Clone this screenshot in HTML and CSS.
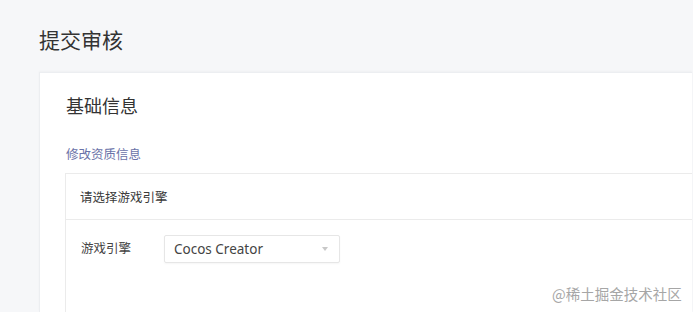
FILE: index.html
```html
<!DOCTYPE html>
<html lang="zh">
<head>
<meta charset="utf-8">
<title>提交审核</title>
<link rel="stylesheet" href="styles.css">
</head>
<body>
<div class="page">
  <h1 class="title">提交审核</h1>
  <div class="card">
    <h2 class="card-title">基础信息</h2>
    <a class="link">修改资质信息</a>
    <div class="panel">
      <div class="panel-head">请选择游戏引擎</div>
      <div class="panel-body">
        <div class="form-row">
          <span class="label">游戏引擎</span>
          <div class="select">
            <span class="select-text">Cocos Creator</span>
            <span class="arrow"></span>
          </div>
        </div>
      </div>
    </div>
  </div>
</div>
<div class="watermark">@稀土掘金技术社区</div>
</body>
</html>
```

FILE: styles.css
```css
html, body {
  margin: 0;
  padding: 0;
  height: 100%;
  overflow: hidden;
}
body {
  background: #f6f7f9;
  font-family: "Noto Sans CJK SC", "Noto Sans", sans-serif;
  color: #333;
}
.page {
  padding: 25px 1px 0 39px;
}
.title {
  margin: 0;
  font-size: 21px;
  line-height: 28px;
  font-weight: 400;
  color: #333;
}
.card {
  margin-top: 19px;
  background: #fff;
  border: 1px solid #eceef1;
  border-right: none;
  border-bottom: none;
  padding: 20px 0 0 25px;
  height: 219px;
  box-sizing: content-box;
  box-shadow: 0 -1px 2px rgba(0,0,0,0.03);
}
.card-title {
  margin: 0;
  font-size: 18px;
  line-height: 24px;
  font-weight: 400;
  color: #333;
  padding-left: 1px;
}
.link {
  display: block;
  margin-top: 28px;
  padding-left: 1px;
  font-size: 12.5px;
  line-height: 18px;
  color: #6a72a8;
}
.panel {
  margin-top: 10px;
  border: 1px solid #ebebeb;
  border-right: none;
  border-bottom: none;
  height: 138px;
}
.panel-head {
  height: 45px;
  border-bottom: 1px solid #ebebeb;
  display: flex;
  align-items: center;
  padding-left: 14px;
  font-size: 12.5px;
  color: #3a3a3a;
}
.panel-body {
  padding: 15px 0 0 15px;
}
.form-row {
  display: flex;
  align-items: center;
}
.label {
  width: 83px;
  font-size: 12.5px;
  color: #444;
  position: relative;
  top: -2px;
}
.select {
  width: 156px;
  height: 26px;
  border: 1px solid #e6e6e6;
  border-radius: 2px;
  box-shadow: 0 1px 2px rgba(0,0,0,0.04);
  display: flex;
  align-items: center;
  justify-content: space-between;
  padding: 0 9px;
  box-sizing: content-box;
}
.select-text {
  font-family: "Noto Sans", "Open Sans", sans-serif;
  font-size: 13.5px;
  color: #444;
}
.arrow {
  width: 0;
  height: 0;
  border-left: 3px solid transparent;
  border-right: 3px solid transparent;
  border-top: 4px solid #c8c8c8;
  margin-right: 2px;
}
.watermark {
  position: absolute;
  left: 552px;
  top: 284px;
  font-size: 14.5px;
  line-height: 20px;
  color: #a6a6a6;
  white-space: nowrap;
}
```
